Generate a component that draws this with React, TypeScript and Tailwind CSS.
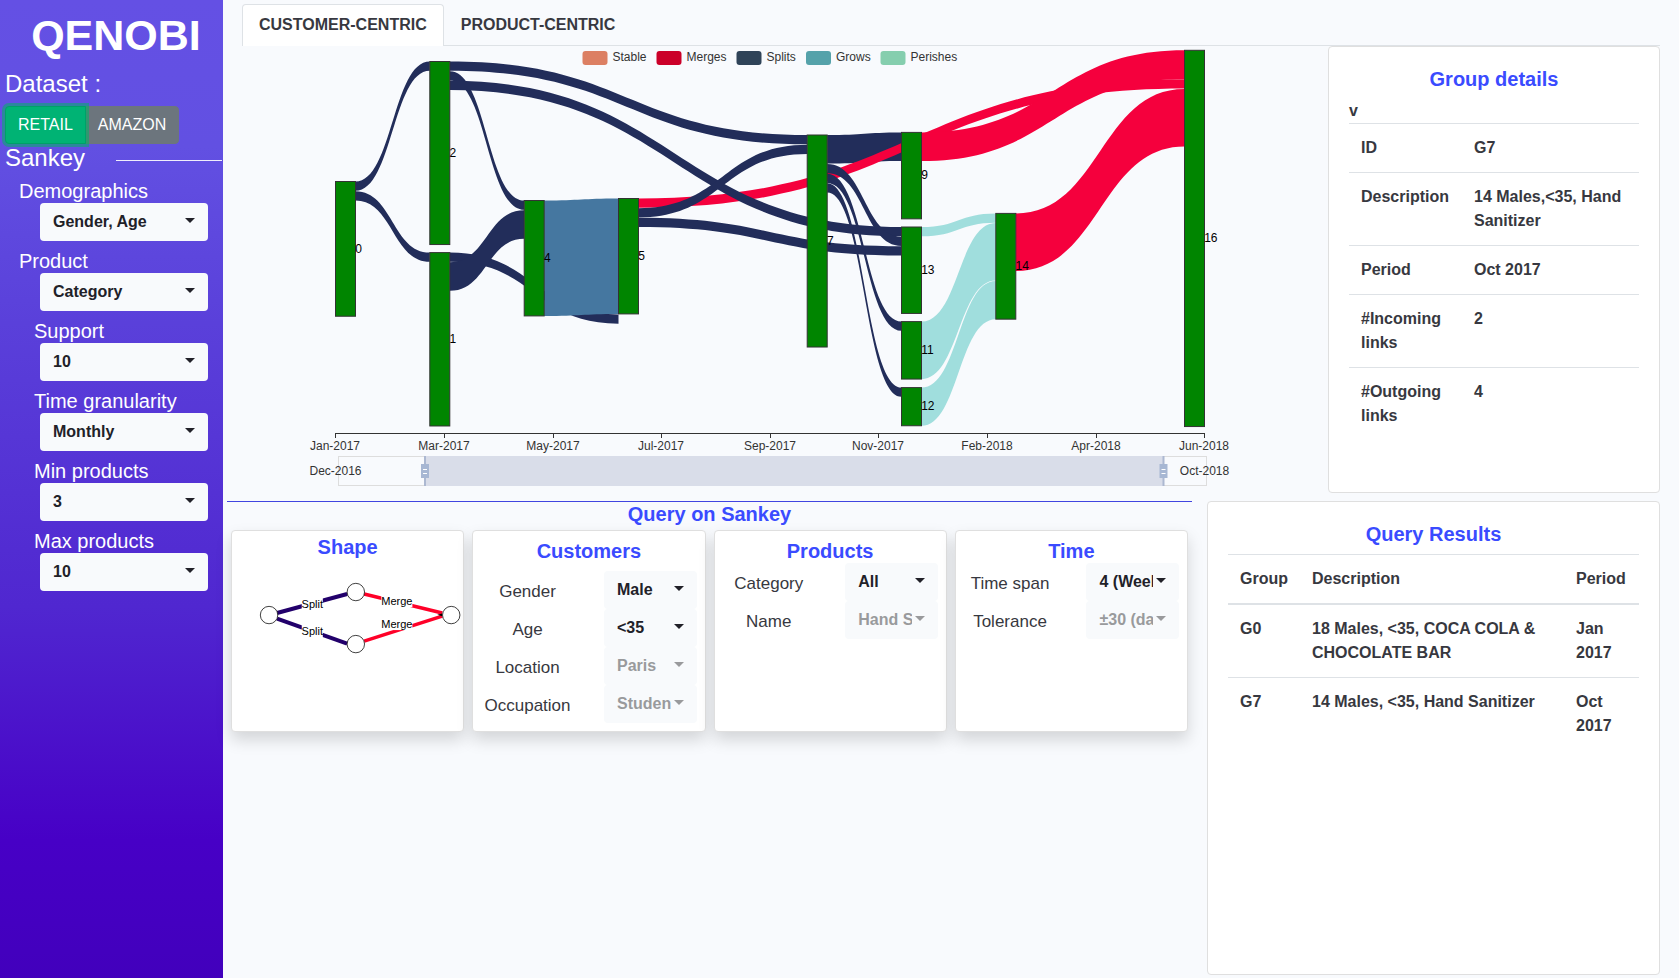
import React, { useId, useState } from "react";

type Option = { value: string; disabled?: boolean };

function Caret() {
  return (
    <svg
      viewBox="0 0 10 5"
      aria-hidden="true"
      className="pointer-events-none absolute right-[13px] top-[15px] h-[5px] w-[10px] fill-current"
    >
      <path d="M0 0h10L5 5z" />
    </svg>
  );
}

function Dropdown({ id, value, disabled }: Option & { id: string }) {
  return (
    <div className={disabled ? "relative text-[#999a9c]" : "relative text-[#212128]"}>
      <select
        id={id}
        disabled={disabled}
        className="block h-[38px] w-full appearance-none rounded border-0 bg-[#f8fafc] pl-[13px] pr-[26px] text-base font-bold opacity-100"
      >
        <option>{value}</option>
      </select>
      <Caret />
    </div>
  );
}

function SidebarField({ label, value, indent }: { label: string; value: string; indent?: boolean }) {
  const id = useId();
  return (
    <div className="mb-2">
      <label htmlFor={id} className={indent ? "block pl-[34px] text-xl leading-6" : "block pl-[19px] text-xl leading-6"}>
        {label}
      </label>
      <div className="pl-10 pr-[15px]">
        <Dropdown id={id} value={value} />
      </div>
    </div>
  );
}

function Sidebar() {
  const [dataset, setDataset] = useState("RETAIL");
  const names = ["RETAIL", "AMAZON"];
  return (
    <aside className="w-[223px] shrink-0 bg-[linear-gradient(180deg,#6450e4_0%,#6250e2_15%,#5a40da_33%,#5027d0_62%,#4700c6_86%,#4200bc_100%)] text-white">
      <h1 className="mb-2 pl-[9px] pt-[9px] text-center text-[43px] font-bold leading-[52px]">QENOBI</h1>
      <h2 className="mb-2 pl-[5px] text-2xl leading-[29px]">Dataset :</h2>
      <div className="flex pl-[5px]" role="group" aria-label="Dataset">
        {names.map((name) => (
          <button
            key={name}
            type="button"
            onClick={() => setDataset(name)}
            aria-pressed={dataset === name}
            className={
              dataset === name
                ? "relative z-10 h-[38px] border border-[#00a068] bg-[#00b374] px-3 text-base shadow-[0_0_0_3px_rgba(0,180,100,0.55)] first:rounded-l last:-ml-px last:rounded-r"
                : "h-[38px] border border-[#6c757d] bg-[#6c757d] px-3 text-base first:rounded-l last:-ml-px last:rounded-r"
            }
          >
            {name}
          </button>
        ))}
      </div>
      <div className="mb-2 flex items-center">
        <h2 className="pl-[5px] text-2xl leading-[27px]">Sankey</h2>
        <hr className="ml-[31px] mr-px mt-1.5 flex-1 border-white/90" />
      </div>
      <SidebarField label="Demographics" value="Gender, Age" />
      <SidebarField label="Product" value="Category" />
      <SidebarField label="Support" value="10" indent />
      <SidebarField label="Time granularity" value="Monthly" indent />
      <SidebarField label="Min products" value="3" indent />
      <SidebarField label="Max products" value="10" indent />
    </aside>
  );
}

const NODE_WIDTH = 20;
const UNIT = 9.66;

const NODES: Record<string, { x: number; y: number; units: number }> = {
  "0": { x: 335.5, y: 181.5, units: 14 },
  "2": { x: 429.8, y: 61.5, units: 19 },
  "1": { x: 429.8, y: 252.6, units: 18 },
  "4": { x: 524.2, y: 200.5, units: 12 },
  "5": { x: 618.5, y: 198.5, units: 12 },
  "7": { x: 807.2, y: 135, units: 22 },
  "9": { x: 901.5, y: 132.4, units: 9 },
  "13": { x: 901.5, y: 227, units: 9 },
  "11": { x: 901.5, y: 321.6, units: 6 },
  "12": { x: 901.5, y: 387.6, units: 4 },
  "14": { x: 995.8, y: 213.4, units: 11 },
  "16": { x: 1184.5, y: 50.3, units: 39 },
};

const SPLIT = "#222d5a";
const MERGE = "#f5003d";
const GROW = "#4577a0";
const PERISH = "#a0dedd";

// from, offset in the source, to, offset in the target, thickness, colour
const LINKS: [string, number, string, number, number, string][] = [
  ["7", 0, "9", 0, 3, SPLIT],
  ["5", 0, "16", 3, 1, MERGE],
  ["0", 0, "2", 0, 1, SPLIT],
  ["0", 1, "1", 0, 1, SPLIT],
  ["2", 0, "7", 0, 1, SPLIT],
  ["2", 1, "4", 0, 1, SPLIT],
  ["2", 2, "13", 0, 1, SPLIT],
  ["1", 0, "5", 12, 1, SPLIT],
  ["1", 1, "4", 1, 3, SPLIT],
  ["4", 0, "5", 0, 12, GROW],
  ["5", 1, "7", 1, 1, SPLIT],
  ["5", 2, "13", 2, 1, SPLIT],
  ["7", 3, "13", 1, 1, SPLIT],
  ["7", 4, "11", 0, 1, SPLIT],
  ["7", 5, "12", 0, 1, SPLIT],
  ["9", 0, "16", 0, 3, MERGE],
  ["13", 0, "14", 0, 1, PERISH],
  ["11", 0, "14", 1, 6, PERISH],
  ["12", 0, "14", 7, 4, PERISH],
  ["14", 0, "16", 4, 6, MERGE],
];

function ribbon([from, a, to, b, n]: [string, number, string, number, number, string]) {
  const x1 = NODES[from].x + NODE_WIDTH;
  const x2 = NODES[to].x;
  const y1 = NODES[from].y + a * UNIT;
  const y2 = NODES[to].y + b * UNIT;
  const h = n * UNIT - 0.4;
  const m = (x1 + x2) / 2;
  return `M${x1} ${y1}C${m} ${y1} ${m} ${y2} ${x2} ${y2}V${y2 + h}C${m} ${y2 + h} ${m} ${y1 + h} ${x1} ${y1 + h}Z`;
}

const LEGEND: [string, number, string][] = [
  ["Stable", 582.5, "#dc7f63"],
  ["Merges", 656.5, "#cb0029"],
  ["Splits", 736.5, "#2f4358"],
  ["Grows", 806, "#55a2aa"],
  ["Perishes", 880.5, "#85ceae"],
];

const TICKS: [string, number][] = [
  ["Jan-2017", 335.5],
  ["Mar-2017", 444.5],
  ["May-2017", 553.5],
  ["Jul-2017", 661.5],
  ["Sep-2017", 770.5],
  ["Nov-2017", 878.5],
  ["Feb-2018", 987.5],
  ["Apr-2018", 1096.5],
  ["Jun-2018", 1204.5],
];

function SliderHandle({ x }: { x: number }) {
  return (
    <g>
      <rect x={x - 1} y="456" width="2" height="30" fill="#acb8d1" />
      <rect x={x - 4} y="464" width="8" height="14" fill="#a7b7d3" />
      <path d={`M${x - 2} 469.5h4M${x - 2} 473.5h4`} stroke="#fff" />
    </g>
  );
}

function SankeyChart() {
  return (
    <svg viewBox="227 46 1101 447" role="img" aria-label="Sankey chart" className="block min-w-0 flex-1" fontSize="12">
      {LEGEND.map(([name, x, color]) => (
        <g key={name}>
          <rect x={x} y="51" width="25" height="14" rx="3" fill={color} />
          <text x={x + 30} y="61" fill="#333">
            {name}
          </text>
        </g>
      ))}
      {LINKS.map((link, i) => (
        <path key={i} d={ribbon(link)} fill={link[5]} />
      ))}
      {Object.entries(NODES).map(([name, n]) => (
        <rect key={name} x={n.x} y={n.y} width={NODE_WIDTH} height={n.units * UNIT - 0.5} fill="#008500" stroke="#333" />
      ))}
      {Object.entries(NODES).map(([name, n]) => (
        <text key={name} x={n.x + NODE_WIDTH - 0.3} y={n.y + (n.units * UNIT) / 2 + 3.5} fill="#000">
          {name}
        </text>
      ))}
      <path d="M335 433.5H1205" stroke="#333" />
      {TICKS.map(([name, x]) => (
        <g key={name}>
          <path d={`M${x} 433v5`} stroke="#333" />
          <text x={x - 0.5} y="450" textAnchor="middle" fill="#333">
            {name}
          </text>
        </g>
      ))}
      <rect x="338.5" y="456.5" width="868" height="29" fill="none" stroke="#ddd" />
      <rect x="425" y="456" width="738" height="30" fill="#d9dde9" />
      <SliderHandle x={425} />
      <SliderHandle x={1163.5} />
      <text x="335.5" y="475" textAnchor="middle" fill="#333">
        Dec-2016
      </text>
      <text x="1204.5" y="475" textAnchor="middle" fill="#333">
        Oct-2018
      </text>
    </svg>
  );
}

const EDGES: [string, string, number, number, number][] = [
  ["Split", "M277 613L347 594", 4, 312.2, 607.5],
  ["Merge", "M364 594L442 613", 3.5, 396.7, 604.5],
  ["Merge", "M364 641L442 616", 3.5, 396.7, 627.5],
  ["Split", "M277 618.5L347 643.5", 4, 312.2, 635],
];

function ShapeDiagram() {
  return (
    <svg viewBox="232 559 231 140" role="img" aria-label="Split and merge shape" className="block w-full" fontSize="11">
      {EDGES.map(([name, d, width, x, y], i) => {
        const half = name === "Split" ? 10.5 : 15.5;
        return (
          <g key={i}>
            <path d={d} stroke={name === "Split" ? "#22006b" : "#ff0028"} strokeWidth={width} />
            <rect x={x - half} y={y - 10} width={half * 2} height="12.5" fill="#fff" />
            <text x={x} y={y} textAnchor="middle" fill="#000">
              {name}
            </text>
          </g>
        );
      })}
      <path d="M437 614.8l5-1.3v2.6z" fill="#000" />
      {[
        [269, 615],
        [355.7, 592],
        [355.7, 644],
        [451, 615],
      ].map(([cx, cy]) => (
        <circle key={`${cx}-${cy}`} cx={cx} cy={cy} r="8.7" fill="#fff" stroke="#111" strokeWidth="0.8" />
      ))}
    </svg>
  );
}

function QueryField({ label, value, disabled }: Option & { label: string }) {
  const id = useId();
  return (
    <div className="flex items-center justify-between">
      <label htmlFor={id} className="w-[43%] pt-[3px] text-center text-[17px] leading-6">
        {label}
      </label>
      <div className="w-[43%]">
        <Dropdown id={id} value={value} disabled={disabled} />
      </div>
    </div>
  );
}

const CARD = "rounded border border-[#dfdfdf] bg-white";
const QUERY_CARD = "rounded border border-[#dfdfdf] bg-white shadow-[0_8px_16px_rgba(0,0,0,0.15)]";
const TITLE = "text-center text-xl font-bold leading-6 text-[#3a4bff]";

function QuerySection() {
  return (
    <section className="min-w-0 flex-1">
      <div className="border-t border-[#4145e0]">
        <h2 className={TITLE}>Query on Sankey</h2>
      </div>
      <div className="mt-1 grid grid-cols-4 gap-2 px-1">
        <div className={QUERY_CARD}>
          <h3 className={`${TITLE} pt-1`}>Shape</h3>
          <ShapeDiagram />
        </div>
        <div className={`${QUERY_CARD} p-2`}>
          <h3 className={`${TITLE} mb-2`}>Customers</h3>
          <QueryField label="Gender" value="Male" />
          <QueryField label="Age" value="<35" />
          <QueryField label="Location" value="Paris" disabled />
          <QueryField label="Occupation" value="Student" disabled />
        </div>
        <div className={`${QUERY_CARD} p-2`}>
          <h3 className={TITLE}>Products</h3>
          <QueryField label="Category" value="All" />
          <QueryField label="Name" value="Hand Sanitizer" disabled />
        </div>
        <div className={`${QUERY_CARD} p-2`}>
          <h3 className={TITLE}>Time</h3>
          <QueryField label="Time span" value="4 (Weeks)" />
          <QueryField label="Tolerance" value="±30 (days)" disabled />
        </div>
      </div>
    </section>
  );
}

const DETAILS = [
  ["ID", "G7"],
  ["Description", "14 Males,<35, Hand Sanitizer"],
  ["Period", "Oct 2017"],
  ["#Incoming links", "2"],
  ["#Outgoing links", "4"],
];

function GroupDetails() {
  return (
    <section className={`${CARD} w-[332px] shrink-0 p-5 font-bold`}>
      <h2 className={`${TITLE} mb-2`}>Group details</h2>
      <p>v</p>
      <table className="w-full table-fixed border-separate border-spacing-0 text-left">
        <tbody>
          {DETAILS.map(([name, value]) => (
            <tr key={name} className="align-top">
              <th scope="row" className="w-[113px] border-t border-[#dee2e6] p-3">
                {name}
              </th>
              <td className="border-t border-[#dee2e6] p-3">{value}</td>
            </tr>
          ))}
        </tbody>
      </table>
    </section>
  );
}

function QueryResults() {
  const head = "border-b-2 border-t border-[#dee2e6] p-3";
  return (
    <section className={`${CARD} w-[453px] shrink-0 p-5 font-bold`}>
      <h2 className={`${TITLE} mb-2`}>Query Results</h2>
      <table className="w-full table-fixed border-separate border-spacing-0 text-left">
        <thead>
          <tr>
            <th className={`${head} w-[72px]`}>Group</th>
            <th className={head}>Description</th>
            <th className={`${head} w-[75px]`}>Period</th>
          </tr>
        </thead>
        <tbody>
          <tr className="align-top">
            <td className="p-3">G0</td>
            <td className="p-3">18 Males, &lt;35, COCA COLA &amp; CHOCOLATE BAR</td>
            <td className="p-3">Jan 2017</td>
          </tr>
          <tr className="align-top">
            <td className="border-t border-[#dee2e6] p-3">G7</td>
            <td className="border-t border-[#dee2e6] p-3">14 Males, &lt;35, Hand Sanitizer</td>
            <td className="border-t border-[#dee2e6] p-3">Oct 2017</td>
          </tr>
        </tbody>
      </table>
    </section>
  );
}

export default function App() {
  return (
    <div className="flex min-h-screen bg-[#f8fafd] font-['Liberation_Sans',sans-serif] text-base text-[#373840]">
      <Sidebar />
      <main className="flex min-w-0 flex-1 flex-col pb-[3px] pl-1 pr-[19px] pt-1">
        <nav className="ml-[15px] flex border-b border-[#dee2e6] font-bold">
          <a
            href="#customer"
            aria-current="page"
            className="-mb-px rounded-t border border-b-0 border-[#dee2e6] bg-white px-4 pb-[9px] pt-2"
          >
            CUSTOMER-CENTRIC
          </a>
          <a href="#product" className="border border-b-0 border-transparent px-4 py-2">
            PRODUCT-CENTRIC
          </a>
        </nav>
        <div className="flex">
          <SankeyChart />
          <GroupDetails />
        </div>
        <div className="mt-2 flex flex-1 gap-[15px]">
          <QuerySection />
          <QueryResults />
        </div>
      </main>
    </div>
  );
}
